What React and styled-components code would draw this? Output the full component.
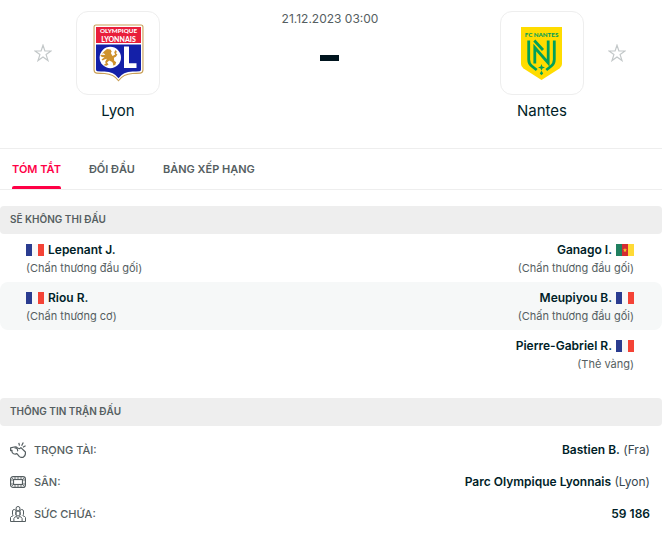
import React from 'react';
import styled, { createGlobalStyle, css } from 'styled-components';

const GlobalStyle = createGlobalStyle`
  *, *::before, *::after { box-sizing: border-box; }
  body {
    margin: 0;
    background: #fff;
    color: #001e28;
    font-family: Inter, "Liberation Sans", sans-serif;
    font-size: 12px;
    line-height: 16px;
  }
`;

const Page = styled.main`
  padding-right: 1px;
`;

const Header = styled.header`
  display: flex;
  justify-content: space-between;
  align-items: flex-start;
  padding: 11px 36px 27px 34px;
  border-bottom: 1px solid #eee;
`;

const Side = styled.div`
  display: flex;
  flex-direction: ${(p) => (p.$away ? 'row-reverse' : 'row')};
  gap: 24px;
`;

const StarButton = styled.button`
  width: 18px;
  height: 84px;
  padding: 0;
  border: 0;
  background: none;
  color: #c3c8c9;
  cursor: pointer;
  svg { display: block; }
`;

const Team = styled.div`
  display: flex;
  flex-direction: column;
  align-items: center;
  gap: 6px;
  width: 84px;
`;

const Crest = styled.div`
  display: grid;
  place-items: center;
  width: 84px;
  height: 84px;
  border: 1px solid #eee;
  border-radius: 12px;
`;

const TeamLink = styled.a`
  color: #001e28;
  font-size: 15px;
  line-height: 20px;
  text-decoration: none;
`;

const Score = styled.div`
  display: flex;
  flex-direction: column;
  align-items: center;
  gap: 28px;
  color: #555e61;
`;

const Dash = styled.div`
  width: 19px;
  height: 6px;
  background: #00141e;
`;

const Tabs = styled.nav`
  display: flex;
  gap: 28px;
  height: 41px;
  padding: 0 12px;
  border-bottom: 1px solid #eee;
`;

const Tab = styled.a`
  position: relative;
  display: flex;
  align-items: center;
  color: #555e61;
  font-size: 11px;
  font-weight: 600;
  text-decoration: none;
  ${(p) => p.$active && css`
    color: #ff0046;
    &::after {
      content: '';
      position: absolute;
      inset: auto 0 0;
      height: 3px;
      border-radius: 2px 2px 0 0;
      background: #ff0046;
    }
  `}
`;

const Section = styled.section`
  margin-top: ${(p) => (p.$first ? 16 : 20)}px;
`;

const SectionTitle = styled.h2`
  margin: 0;
  padding: 5px 10px 7px;
  border-radius: 4px;
  background: #eee;
  color: #555e61;
  font-size: 10px;
  font-weight: 600;
`;

const PlayerRow = styled.div`
  display: flex;
  justify-content: space-between;
  height: 48px;
  padding: 8px 28px 0 26px;
  border-radius: 8px;
  &:nth-of-type(even) { background: #f6f8f8; }
`;

const Player = styled.div`
  display: flex;
  flex-direction: column;
  gap: 2px;
  align-items: ${(p) => (p.$away ? 'flex-end' : 'flex-start')};
`;

const PlayerLine = styled.div`
  display: flex;
  flex-direction: ${(p) => (p.$away ? 'row-reverse' : 'row')};
  align-items: center;
  gap: 4px;
  svg { display: block; }
`;

const PlayerLink = styled.a`
  color: #001e28;
  font-weight: 600;
  text-decoration: none;
`;

const Reason = styled.span`
  color: #555e61;
  font-size: 11px;
`;

const InfoList = styled.dl`
  margin: 8px 0 0;
`;

const InfoRow = styled.div`
  display: flex;
  align-items: center;
  gap: 8px;
  height: 32px;
  padding: 0 12px 0 10px;
`;

const InfoLabel = styled.dt`
  display: flex;
  align-items: center;
  gap: 8px;
  color: #555e61;
  font-size: 11px;
  font-weight: 500;
  svg { display: block; }
`;

const InfoValue = styled.dd`
  margin: 0 0 0 auto;
  font-weight: 600;
`;

const Note = styled.span`
  color: #37474f;
  font-weight: 400;
`;

const Star = () => (
  <svg width="18" height="18" viewBox="0 0 18 18" fill="none" stroke="currentColor" strokeWidth="1.2">
    <path d="M9 1.2 10.9 7H17l-4.9 3.6 1.9 6L9 13l-5 3.6 1.9-6L1 7h6.1z" />
  </svg>
);

const LyonCrest = () => (
  <svg width="51" height="58" viewBox="0 0 51 58" aria-hidden="true">
    <path d="M3 .5h45q2.500 0 2.500 2.500v43q0 3-3 3.700-4 .3-8 .3-9 .5-14 7.400Q20.500 50.500 11.500 50q-4 0-8-.3-3-.7-3-3.700V3Q.5.5 3 .5z" fill="#c99f56" />
    <path d="M3 1.600h45q1.400 0 1.400 1.400v42.800q0 2.400-2.200 2.800-4 .4-8 .4-9.200.600-13.700 7Q21 49.600 11.800 49q-4 0-8-.4-2.200-.4-2.200-2.800V3q0-1.400 1.400-1.400z" fill="#fff" />
    <path d="M3 3h45v16H3z" fill="#e91e3a" />
    <path d="M3 20.500h45v25q0 1.500-1.400 1.700-3.600.4-7 .4-9.600.4-14.100 6.600-4.500-6.200-14.100-6.600-3.400 0-7-.4Q3 47 3 45.500z" fill="#1420a8" />
    <g fill="#fff" fontFamily="Lato, sans-serif" fontWeight="900" textAnchor="middle">
      <text x="25.500" y="9" fontSize="6.300">OLYMPIQUE</text>
      <text x="25.500" y="17.500" fontSize="7">LYONNAIS</text>
    </g>
    <circle cx="17.300" cy="33.500" r="10.700" fill="#fff" />
    <path d="M31 22.500h5v16.700h7.500V44H31z" fill="#fff" />
    <path d="m11.500 27 2.500-2 3.500.5 1.200 2-.9 1.500 1.700 3 2.700-1.500-1-2 1.200-2.400 1.500 1.600-1 1.500 1.500 1.400-1.500 2.200-2 1 .3 3 2 1.500-1 2.600-2.300.6.300-1.500-1-2-3-1.500-2.200 2 1.500 2-2 1.200-2.500-.5.5-1 1.200-.4-.5-2 1.700-3-2.500.8-1.700 1-1.200-1.200 3-2.200-2.600-.3-1.600-1.400 1-.8 4 .3-1.500-1.700-2 .4z" fill="#cf922e" />
  </svg>
);

const NantesCrest = () => (
  <svg width="41" height="54" viewBox="0 -1 41 54" aria-hidden="true">
    <path d="M0 0h41v37q0 2.500-2.500 4.500L20.500 53 2.500 41.500Q0 39.500 0 37z" fill="#ffdc00" />
    <text x="20.500" y="10.400" fill="#00a05a" fontFamily="Lato, sans-serif" fontWeight="900" fontSize="6.200" textAnchor="middle">FC NANTES</text>
    <g fill="none" stroke="#00a05a" strokeWidth="2.800">
      <path d="M7.700 13.500v19q0 4 3 6.500l5 4M33.300 13.500v19q0 4-3 6.500l-5 4" />
      <path d="M13.800 36.500V20.500L27.200 36V13.500M13.300 13.500l8.700 9.500" />
    </g>
    <path d="m20.500 37 .9 2.600 2.600.9-2.600.9-.9 2.300 1.700 2.800-1.700 1.700-1.700-1.700 1.700-2.800-.9-2.300-2.600-.9 2.600-.9z" fill="#00a05a" />
  </svg>
);

const flagColors = {
  Fra: ['#2a3c90', '#f8f8f8', '#f44336'],
  Cmr: ['#208060', '#d52b32', '#ffda35'],
};

const Flag = ({ country }) => (
  <svg width="18" height="12" viewBox="0 0 18 12" role="img" aria-label={country}>
    {flagColors[country].map((color, i) => (
      <rect key={color} x={i * 6} width="6" height="12" fill={color} />
    ))}
    {country === 'Cmr' && <path d="m9 4 .6 1.300 1.400.2-1 1 .2 1.400L9 7.300l-1.200.6.200-1.400-1-1 1.400-.2z" fill="#f6c12f" />}
  </svg>
);

const WhistleIcon = () => (
  <svg width="16" height="16" viewBox="0 0 16 16" fill="none" stroke="#555e61" strokeWidth="1.200" strokeLinejoin="round">
    <path d="M.600 8.700V5.900L4.200 5q2.300-.4 3.400 1l2 .7 1.300-1.100 4.500 4.400q.5 3.500-2 5.100-2.300 1-4.200-.7L6.900 11.600q-1.400 1-3.300.2Q1.500 10.800 2 8.400z" />
    <path d="M4.500 5.900q2.200-.2 2.900 1.300t-.1 2M9.500 3.700 8.800.9M11.600 3.800 13.300.5M12.900 5.300l2.700-1.500" />
  </svg>
);

const StadiumIcon = () => (
  <svg width="16" height="16" viewBox="0 0 16 16" fill="none" stroke="#555e61">
    <rect x=".6" y="2.600" width="14.800" height="10.800" rx="2.500" strokeWidth="1.200" />
    <rect x="3.500" y="5.500" width="9" height="5" strokeWidth="1.200" />
    <path d="M1 6h2.500M1 10h2.500M12.500 6H15M12.500 10H15M5 2.500v3M11 2.500v3M5 10.500v3M11 10.500v3M8 2.500v3M8 10.500v3M1.500 3.500l2 2M14.500 3.500l-2 2M1.500 12.500l2-2M14.500 12.500l-2-2" strokeWidth=".8" />
  </svg>
);

const CrowdIcon = () => (
  <svg width="16" height="16" viewBox="0 0 16 16" fill="none" stroke="#555e61" strokeLinejoin="round">
    <path d="M6.100 3V2Q6.300.5 8 .5T9.900 2v1q0 2-1.900 2T6.100 3z" />
    <path d="M5.900 6.300V8q.2 2 2.100 2t2.100-2V6.300Q9.800 5 8 5T5.900 6.300z" />
    <path d="M3.900 15.500v-3q.2-1.300 2.600-2.200L8 13l1.500-2.700q2.400.9 2.600 2.200v3M.5 15.500v-4q.2-1 2.300-1.500l.2-.7Q2.200 8.300 2.500 7V5Q2.700 3.500 4.300 3.500T6 5v2q0 1.500-.8 2.300M15.500 15.500v-4q-.2-1-2.300-1.500l-.2-.7q.8-1 .5-2.300V5q-.2-1.500-1.800-1.500T10 5v2q0 1.500.8 2.300M.5 15.500h15" />
  </svg>
);

const absences = [
  {
    home: { name: 'Lepenant J.', country: 'Fra', reason: 'Chấn thương đầu gối' },
    away: { name: 'Ganago I.', country: 'Cmr', reason: 'Chấn thương đầu gối' },
  },
  {
    home: { name: 'Riou R.', country: 'Fra', reason: 'Chấn thương cơ' },
    away: { name: 'Meupiyou B.', country: 'Fra', reason: 'Chấn thương đầu gối' },
  },
  { home: null, away: { name: 'Pierre-Gabriel R.', country: 'Fra', reason: 'Thẻ vàng' } },
];

const info = [
  { icon: <WhistleIcon />, label: 'TRỌNG TÀI:', value: 'Bastien B.', note: '(Fra)' },
  { icon: <StadiumIcon />, label: 'SÂN:', value: 'Parc Olympique Lyonnais', note: '(Lyon)' },
  { icon: <CrowdIcon />, label: 'SỨC CHỨA:', value: '59 186' },
];

const AbsentPlayer = ({ player, away }) => (
  <Player $away={away}>
    {player && (
      <>
        <PlayerLine $away={away}>
          <Flag country={player.country} />
          <PlayerLink href="#player">{player.name}</PlayerLink>
        </PlayerLine>
        <Reason>({player.reason})</Reason>
      </>
    )}
  </Player>
);

const TeamSide = ({ name, crest, away }) => (
  <Side $away={away}>
    <StarButton type="button" aria-label={name}><Star /></StarButton>
    <Team>
      <Crest>{crest}</Crest>
      <TeamLink href="#team">{name}</TeamLink>
    </Team>
  </Side>
);

export default function App() {
  return (
    <Page>
      <GlobalStyle />
      <Header>
        <TeamSide name="Lyon" crest={<LyonCrest />} />
        <Score>
          <time dateTime="2023-12-21T03:00">21.12.2023 03:00</time>
          <Dash />
        </Score>
        <TeamSide name="Nantes" crest={<NantesCrest />} away />
      </Header>
      <Tabs>
        <Tab href="#summary" $active>TÓM TẮT</Tab>
        <Tab href="#h2h">ĐỐI ĐẦU</Tab>
        <Tab href="#standings">BẢNG XẾP HẠNG</Tab>
      </Tabs>
      <Section $first>
        <SectionTitle>SẼ KHÔNG THI ĐẤU</SectionTitle>
        {absences.map((row) => (
          <PlayerRow key={row.away.name}>
            <AbsentPlayer player={row.home} />
            <AbsentPlayer player={row.away} away />
          </PlayerRow>
        ))}
      </Section>
      <Section>
        <SectionTitle>THÔNG TIN TRẬN ĐẤU</SectionTitle>
        <InfoList>
          {info.map((row) => (
            <InfoRow key={row.label}>
              <InfoLabel>{row.icon}{row.label}</InfoLabel>
              <InfoValue>{row.value}{row.note && <Note> {row.note}</Note>}</InfoValue>
            </InfoRow>
          ))}
        </InfoList>
      </Section>
    </Page>
  );
}
